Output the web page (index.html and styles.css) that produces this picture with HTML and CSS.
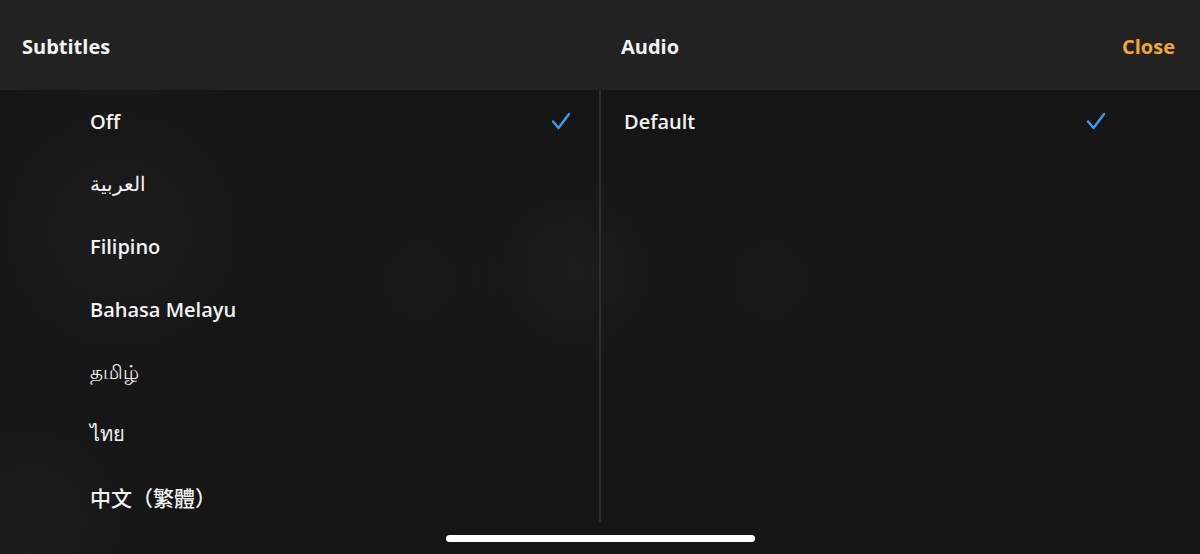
FILE: index.html
```html
<!DOCTYPE html>
<html lang="en">
<head>
    <meta charset="UTF-8">
    <meta name="viewport" content="width=device-width, initial-scale=1.0">
    <title>Subtitles and Audio</title>
    <link rel="stylesheet" href="styles.css">
</head>
<body>

    <header class="top-bar">
        <div class="top-left">Subtitles</div>
        <div class="top-right">
            <span>Audio</span>
            <button class="close-btn">Close</button>
        </div>
    </header>

    <main class="panels">
        <ul class="options subtitles">
            <li class="selected">Off <svg class="check" viewBox="0 0 20 18"><path d="M2 9.5 L7.5 16 L18 2"/></svg></li>
            <li class="light" lang="ar">العربية</li>
            <li>Filipino</li>
            <li>Bahasa Melayu</li>
            <li class="light" lang="ta">தமிழ்</li>
            <li class="light" lang="th">ไทย</li>
            <li class="cjk" lang="zh-Hant">中文（繁體）</li>
        </ul>
        <div class="divider"></div>
        <ul class="options audio">
            <li class="selected">Default <svg class="check" viewBox="0 0 20 18"><path d="M2 9.5 L7.5 16 L18 2"/></svg></li>
        </ul>
    </main>

    <div class="home-bar"></div>

</body>
</html>
```

FILE: styles.css
```css
body {
    margin: 0;
    width: 1200px;
    height: 554px;
    overflow: hidden;
    font-family: "Open Sans", "Noto Sans", "Noto Sans CJK TC", sans-serif;
    color: #f2f2f2;
    background-color: #151515;
    background-image:
        radial-gradient(circle at 575px 270px, rgba(255,255,255,0.035), transparent 110px),
        radial-gradient(circle at 420px 280px, rgba(255,255,255,0.02), transparent 90px),
        radial-gradient(circle at 770px 280px, rgba(255,255,255,0.02), transparent 90px),
        radial-gradient(circle at 120px 230px, rgba(255,255,255,0.03), transparent 180px),
        radial-gradient(circle at 30px 520px, rgba(255,255,255,0.03), transparent 140px);
    position: relative;
}
.top-bar {
    height: 90px;
    background-color: #222222;
    display: flex;
    align-items: center;
    font-size: 20px;
    font-weight: 700;
    padding: 2px 25px 0 22px;
    box-sizing: border-box;
}
.top-left {
    width: 599px;
}
.top-right {
    flex: 1;
    display: flex;
    justify-content: space-between;
    align-items: center;
}
.close-btn {
    background: none;
    border: none;
    padding: 0;
    font-family: inherit;
    font-size: 20px;
    font-weight: 700;
    color: #f1a53a;
    cursor: pointer;
}
.panels {
    display: flex;
    height: 432px;
}
.divider {
    width: 2px;
    background-color: #2e2e2e;
}
.options {
    list-style: none;
    margin: 0;
    padding: 0;
}
.subtitles {
    width: 599px;
    padding-left: 90px;
    padding-right: 28px;
    box-sizing: border-box;
}
.audio {
    flex: 1;
    padding-left: 23px;
    padding-right: 94px;
}
.options li {
    height: 62.6px;
    display: flex;
    align-items: center;
    justify-content: space-between;
    font-size: 20px;
    font-weight: 600;
}
.options li.light {
    font-weight: 400;
}
.options li.cjk {
    font-family: "Noto Sans CJK TC", sans-serif;
    font-weight: 500;
    font-size: 21px;
}
.check {
    width: 20px;
    height: 18px;
    fill: none;
    stroke: #3f9cec;
    stroke-width: 2.4;
    stroke-linecap: round;
    stroke-linejoin: round;
}
.home-bar {
    position: absolute;
    left: 446px;
    top: 535px;
    width: 309px;
    height: 7px;
    border-radius: 4px;
    background-color: #ffffff;
}
```
